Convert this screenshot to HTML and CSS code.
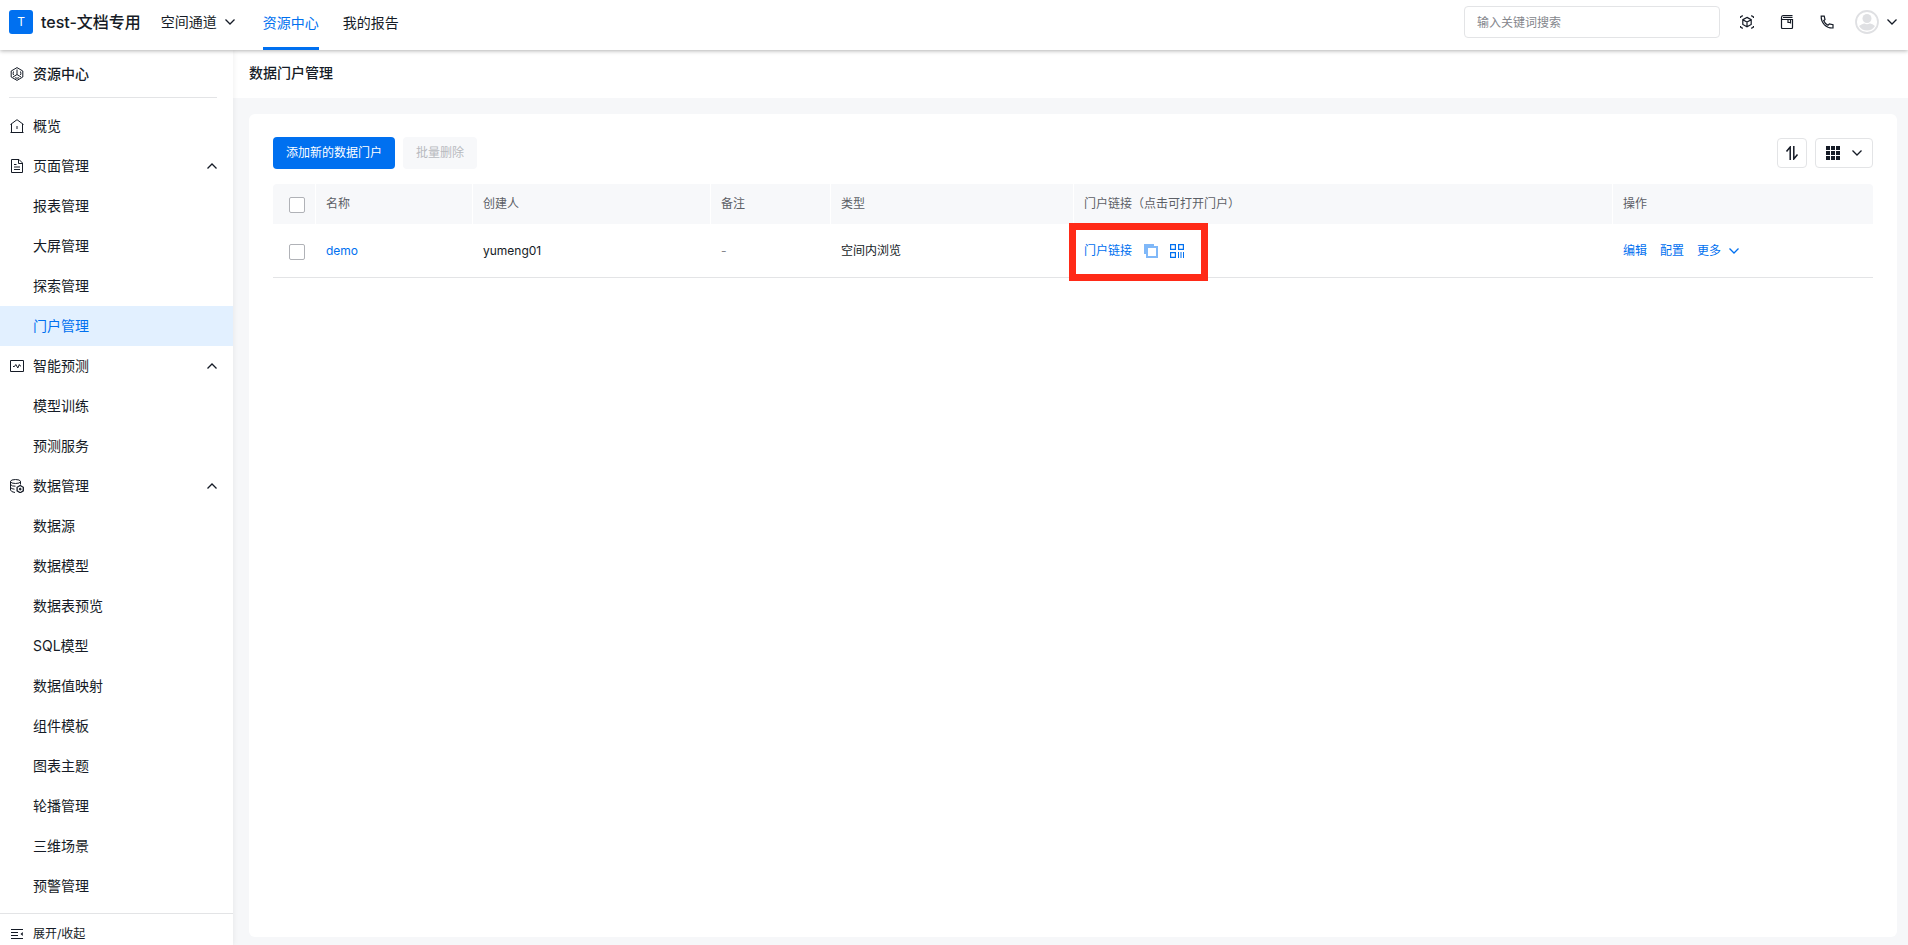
FILE: index.html
```html
<!DOCTYPE html>
<html lang="zh-CN">
<head>
<meta charset="utf-8">
<title>数据门户管理</title>
<link rel="stylesheet" href="styles.css">
</head>
<body>
<svg class="defs" aria-hidden="true">
  <symbol id="down" viewBox="0 0 10 6"><path d="M.5.5 5 5 9.500.5" fill="none" stroke="currentColor" stroke-width="1.300"/></symbol>
  <symbol id="up" viewBox="0 0 10 6"><path d="M.5 5.500 5 1l4.500 4.500" fill="none" stroke="currentColor" stroke-width="1.300"/></symbol>
</svg>
<header class="topbar">
  <span class="logo">T</span>
  <strong class="space-name">test-文档专用</strong>
  <button class="space-menu" type="button">空间通道 <svg class="chevron"><use href="#down"/></svg></button>
  <nav class="tabs">
    <a class="tab tab-active" href="#">资源中心</a>
    <a class="tab" href="#">我的报告</a>
  </nav>
  <input class="search" type="text" placeholder="输入关键词搜索" aria-label="输入关键词搜索">
  <div class="tools">
    <button class="tool" type="button" aria-label="三维">
      <svg class="icon" viewBox="0 0 14 14" fill="none" stroke="currentColor" stroke-width="1.200"><path d="M7 2.400 11.200 4.700v4.800L7 11.800 2.800 9.500V4.700zM2.800 4.700 7 7l4.200-2.300M7 7v4.800"/><path d="M.6 3V1.800L2.800.6M11.200.6l2.200 1.200V3M.6 11v1.200l2.200 1.200M11.200 13.400l2.200-1.200V11"/></svg>
    </button>
    <button class="tool" type="button" aria-label="文档">
      <svg class="icon" viewBox="0 0 14 14" fill="none" stroke="currentColor" stroke-width="1.200"><path d="M12.500.6H3Q1.500.6 1.500 2.500v10q0 1 1 1h9q1 0 1-1v-8h-10q-1 0-1-1.500M3 2.500h9.500M8 4.500v3h2.500M10.500 4.500v4"/></svg>
    </button>
    <button class="tool" type="button" aria-label="电话">
      <svg class="icon" viewBox="0 0 14 14" fill="none" stroke="currentColor" stroke-width="1.200"><path d="M1.200 1.200h3l.8 3.300-1.300 1.200Q5 8.600 8 10.300l1.300-1.400 3.700.8v3.300Q8 13.300 4.500 9.800 1 6 1.200 1.200z"/></svg>
    </button>
  </div>
  <button class="user" type="button" aria-label="用户">
    <svg class="avatar" viewBox="0 0 24 24"><circle cx="12" cy="12" r="11" fill="#fff" stroke="#dfe0e3" stroke-width="1.800"/><circle cx="12" cy="8.500" r="4.500" fill="#dfe0e3"/><path d="M4 16q4-3 5.500-2.500 2.500 1.500 5 0Q17 13 20 16q-3 4.500-8 4.500T4 16z" fill="#dfe0e3"/></svg>
    <svg class="chevron"><use href="#down"/></svg>
  </button>
</header>
<div class="body">
  <aside class="sidebar">
    <div class="side-head">
      <svg class="icon" viewBox="0 0 14 14" fill="none" stroke="currentColor"><path d="M7 .6 12.800 4v6L7 13.400 1.200 10V4z"/><path d="M7 2.500v5L3 10M7 7.500 11 10M3.500 4.500q-.8 2 0 3.500M10.500 4.500q.8 2 0 3.500M5 10.800q2 .8 4 0"/></svg>
      资源中心
    </div>
    <nav class="menu">
      <a class="item" href="#"><svg class="icon" viewBox="0 0 14 14" fill="none" stroke="currentColor"><path d="M.5 5.500 7 .7l6.500 4.800M1.500 5v8.500h11V5M.5 13.500h13M7 7v3"/></svg>概览</a>
      <button class="item" type="button"><svg class="icon" viewBox="0 0 14 14" fill="none" stroke="currentColor"><path d="M1.500.5h7.500l3.500 3.500v9.500h-11zM8.500.5v4h4M4 5.500h2.500M4 8h6M4 10.500h6"/></svg>页面管理<svg class="chevron arrow"><use href="#up"/></svg></button>
      <a class="item sub" href="#">报表管理</a>
      <a class="item sub" href="#">大屏管理</a>
      <a class="item sub" href="#">探索管理</a>
      <a class="item sub current" href="#">门户管理</a>
      <button class="item" type="button"><svg class="icon" viewBox="0 0 14 14" fill="none" stroke="currentColor"><path d="M.5 1.500h13v11H.5z"/><path d="M3 7.500h1.500L5.800 5.500l2 3.500 1.500-3.500.9 1.500H11"/></svg>智能预测<svg class="chevron arrow"><use href="#up"/></svg></button>
      <a class="item sub" href="#">模型训练</a>
      <a class="item sub" href="#">预测服务</a>
      <button class="item" type="button"><svg class="icon" viewBox="0 0 14 14" fill="none" stroke="currentColor"><ellipse cx="5.500" cy="2.500" rx="5" ry="2"/><path d="M.5 2.500V11q.5 2 4.500 2.500M10.500 2.500v3M.5 5.500q1.500 2 5 1.700M.5 8.500q1.200 1.500 4 1.700"/><path stroke-width="1.300" d="m10.200 6.500 3.100 1.800v3.600l-3.100 1.800-3.100-1.800V8.300z"/><circle cx="10.200" cy="10.100" r=".9" fill="currentColor"/></svg>数据管理<svg class="chevron arrow"><use href="#up"/></svg></button>
      <a class="item sub" href="#">数据源</a>
      <a class="item sub" href="#">数据模型</a>
      <a class="item sub" href="#">数据表预览</a>
      <a class="item sub" href="#">SQL模型</a>
      <a class="item sub" href="#">数据值映射</a>
      <a class="item sub" href="#">组件模板</a>
      <a class="item sub" href="#">图表主题</a>
      <a class="item sub" href="#">轮播管理</a>
      <a class="item sub" href="#">三维场景</a>
      <a class="item sub" href="#">预警管理</a>
    </nav>
    <button class="collapse" type="button"><svg class="icon" viewBox="0 0 14 14" fill="none" stroke="currentColor"><path d="M1 2.500h12M1 5.500h7M1 8.500h7M1 11.500h12"/><path d="M12.800 5 10.500 7l2.300 2z" fill="currentColor" stroke="none"/></svg>展开/收起</button>
  </aside>
  <main class="main">
    <h1 class="page-title">数据门户管理</h1>
    <section class="card">
      <div class="toolbar">
        <button class="btn btn-primary" type="button">添加新的数据门户</button>
        <button class="btn btn-disabled" type="button" disabled>批量删除</button>
        <button class="btn-icon sort" type="button" aria-label="排序"><svg class="icon" viewBox="0 0 14 14" fill="none" stroke="currentColor" stroke-width="1.500"><path d="M1.500 5.500 5.200 1v13M8.800 0v13l3.700-4.500"/></svg></button>
        <button class="btn-icon" type="button" aria-label="视图"><svg class="icon" viewBox="0 0 14 14" fill="currentColor"><path d="M0 0h4v4H0zM5 0h4v4H5zM10 0h4v4h-4zM0 5h4v4H0zM5 5h4v4H5zM10 5h4v4h-4zM0 10h4v4H0zM5 10h4v4H5zM10 10h4v4h-4z"/></svg><svg class="chevron"><use href="#down"/></svg></button>
      </div>
      <table class="table">
        <colgroup><col class="c-check"><col class="c-name"><col class="c-creator"><col class="c-note"><col class="c-type"><col class="c-link"><col class="c-ops"></colgroup>
        <thead>
          <tr><th class="check"><input type="checkbox" aria-label="全选"></th><th>名称</th><th>创建人</th><th>备注</th><th>类型</th><th>门户链接（点击可打开门户）</th><th>操作</th></tr>
        </thead>
        <tbody>
          <tr>
            <td class="check"><input type="checkbox" aria-label="选择 demo"></td>
            <td><a class="link" href="#">demo</a></td>
            <td>yumeng01</td>
            <td class="muted">-</td>
            <td>空间内浏览</td>
            <td><div class="links">
              <a class="link" href="#">门户链接</a>
              <button class="mini" type="button" aria-label="复制"><svg class="icon" viewBox="0 0 14 14" fill="none" stroke="currentColor"><path stroke="#80b8f8" stroke-width="2" d="M3 3h10v10H3z"/><path stroke="#80b8f8" stroke-width="2" d="M1 10V1h9"/></svg></button>
              <button class="mini" type="button" aria-label="二维码"><svg class="icon" viewBox="0 0 14 14" fill="none" stroke="currentColor"><path stroke-width="1.200" d="M.6.6h4.800v4.800H.6zM8.600.6h4.800v4.800H8.600zM.6 8.600h4.800v4.800H.6z"/><path d="M8.500 8v6M11 8v6M13.500 8v6"/></svg></button>
              <span class="marker"></span>
            </div></td>
            <td><div class="ops"><a class="link" href="#">编辑</a><a class="link" href="#">配置</a><button class="more" type="button">更多 <svg class="chevron"><use href="#down"/></svg></button></div></td>
          </tr>
        </tbody>
      </table>
    </section>
  </main>
</div>
</body>
</html>
```
FILE: styles.css
```css
* { box-sizing: border-box; }
body {
  margin: 0;
  height: 100vh;
  display: flex;
  flex-direction: column;
  overflow: hidden;
  color: #151b26;
  background: #f6f7f9;
  font: 14px/20px Inter, "Noto Sans CJK SC", sans-serif;
}
button, input { font: inherit; color: inherit; }
button { margin: 0; padding: 0; border: 0; background: none; }
a { color: inherit; text-decoration: none; }
.defs { position: absolute; width: 0; height: 0; }
.icon { display: block; flex: none; width: 14px; height: 14px; }
.chevron { display: block; flex: none; width: 10px; height: 6px; }

.topbar {
  position: relative;
  z-index: 2;
  flex: none;
  display: flex;
  align-items: center;
  height: 50px;
  padding: 0 11px 6px 9px;
  background: #fff;
  box-shadow: 0 1px 4px rgba(0, 0, 0, .3);
}
.logo {
  width: 24px;
  height: 24px;
  border-radius: 3px;
  background: #0070f0;
  color: #fff;
  font-size: 12px;
  line-height: 24px;
  text-align: center;
}
.space-name { margin-left: 8px; font-size: 16px; font-weight: 500; }
.space-menu { display: flex; align-items: center; gap: 8px; margin-left: 20px; }
.tabs { display: flex; align-self: flex-start; gap: 24px; margin-left: 28px; }
.tab { height: 50px; line-height: 45px; }
.tab-active { color: #0070f0; border-bottom: 3px solid #0070f0; }
.search {
  width: 256px;
  height: 32px;
  margin-left: auto;
  padding: 0 12px;
  border: 1px solid #e3e4e6;
  border-radius: 4px;
  font-size: 12px;
}
.search::placeholder { color: #84868c; }
.tools { display: flex; gap: 26px; margin: 0 21px 0 20px; }
.user { display: flex; align-items: center; gap: 8px; }
.avatar { width: 24px; height: 24px; }

.body { flex: 1; display: flex; min-height: 0; }
.sidebar {
  position: relative;
  z-index: 1;
  flex: none;
  display: flex;
  flex-direction: column;
  width: 233px;
  background: #fff;
  box-shadow: 0 0 6px rgba(0, 0, 0, .08);
}
.side-head {
  display: flex;
  align-items: center;
  gap: 9px;
  height: 48px;
  margin: 0 16px 8px 9px;
  padding: 1px 0 0 1px;
  border-bottom: 1px solid #e3e4e6;
  font-weight: 500;
}
.menu { flex: 1; min-height: 0; overflow: hidden; }
.item {
  display: flex;
  align-items: center;
  gap: 9px;
  width: 100%;
  height: 40px;
  padding: 0 16px 0 10px;
  text-align: left;
}
.sub { padding-left: 33px; }
.current { background: #e2f0ff; color: #0070f0; }
.arrow { margin-left: auto; }
.collapse {
  display: flex;
  align-items: center;
  gap: 9px;
  height: 32px;
  padding: 9px 10px 0;
  border-top: 1px solid #e3e4e6;
  font-size: 12px;
}

.main { flex: 1; display: flex; flex-direction: column; min-width: 0; }
.page-title {
  margin: 0;
  height: 48px;
  padding: 0 16px;
  background: #fff;
  font-size: 14px;
  font-weight: 500;
  line-height: 46px;
}
.card {
  flex: 1;
  margin: 16px 11px 8px 16px;
  padding: 23px 24px;
  border-radius: 6px;
  background: #fff;
}
.toolbar { display: flex; align-items: center; gap: 8px; margin-bottom: 15px; }
.btn { height: 32px; padding: 0 13px; border-radius: 4px; font-size: 12px; }
.btn-primary { background: #0070f0; color: #fff; }
.btn-disabled { background: #f7f8fa; color: #b8babf; }
.btn-icon {
  display: flex;
  align-items: center;
  gap: 12px;
  height: 30px;
  padding: 0 10px;
  border: 1px solid #e3e4e6;
  border-radius: 4px;
}
.sort { margin-left: auto; padding: 0 7px; }

.table { width: 100%; table-layout: fixed; border-collapse: separate; border-spacing: 0; font-size: 12px; }
.c-check { width: 43px; }
.c-name { width: 157px; }
.c-creator { width: 238px; }
.c-note { width: 120px; }
.c-type { width: 243px; }
.c-link { width: 539px; }
th {
  height: 40px;
  padding: 0 10px;
  border-right: 1px solid #fff;
  background: #f7f8fa;
  color: #5c5f66;
  font-weight: 400;
  text-align: left;
}
th:first-child { border-radius: 4px 0 0; }
th:last-child { border-right: 0; border-radius: 0 4px 0 0; }
td { height: 54px; padding: 0 10px; border-bottom: 1px solid #e3e4e6; }
.check { padding: 2px 0 0 16px; }
.check input {
  appearance: none;
  display: block;
  width: 16px;
  height: 16px;
  margin: 0;
  border: 1px solid #b0b2b7;
  border-radius: 2px;
  background: #fff;
}
.link, .more, .mini { color: #0070f0; }
.muted { color: #84868c; }
.links { position: relative; display: inline-flex; align-items: center; gap: 12px; }
.marker {
  position: absolute;
  inset: -18px -24px -20px -15px;
  border: 7px solid #ff2a17;
  pointer-events: none;
}
.ops { display: flex; gap: 13px; }
.more { display: flex; align-items: center; gap: 8px; }
```
